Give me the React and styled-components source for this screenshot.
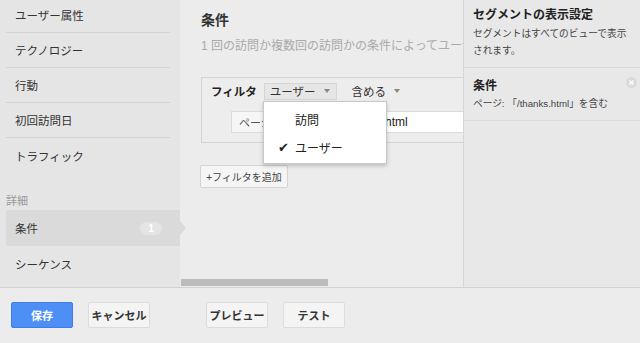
import React from "react";
import styled, { createGlobalStyle } from "styled-components";

const Global = createGlobalStyle`
  html, body { margin: 0; padding: 0; }
  body {
    font-family: "Liberation Sans", "Noto Sans CJK JP", sans-serif;
    color: #333;
    background: #ececec;
  }
  * { box-sizing: border-box; }
`;

const Page = styled.div`
  width: 640px;
  height: 343px;
  display: flex;
  flex-direction: column;
  overflow: hidden;
`;

const Top = styled.div`
  height: 287px;
  display: flex;
`;

const Sidebar = styled.div`
  width: 180px;
  flex-shrink: 0;
  background: #e5e5e5;
  padding-left: 6px;
  display: flex;
  flex-direction: column;
  margin-top: -2px;
`;

const NavItem = styled.div`
  position: relative;
  height: ${(p) => (p.$selected ? 36 : 35)}px;
  margin-right: ${(p) => (p.$selected ? 0 : 10)}px;
  padding: 0 18px 0 9px;
  display: flex;
  align-items: center;
  justify-content: space-between;
  font-size: 11.5px;
  color: #333;
  background: ${(p) => (p.$selected ? "#dadada" : "transparent")};
  border-bottom: ${(p) => (p.$divider ? "1px solid #d3d3d3" : "none")};
  ${(p) =>
    p.$selected &&
    `
    &::after {
      content: "";
      position: absolute;
      right: -6px;
      top: 50%;
      margin-top: -7px;
      border-left: 6px solid #dadada;
      border-top: 7px solid transparent;
      border-bottom: 7px solid transparent;
    }
  `}
`;

const SectionLabel = styled.div`
  margin-top: 20px;
  height: 17px;
  line-height: 17px;
  font-size: 11px;
  color: #9a9a9a;
`;

const Badge = styled.span`
  min-width: 22px;
  height: 13px;
  border-radius: 7px;
  background: #e4e4e4;
  color: #fff;
  font-size: 10px;
  font-weight: bold;
  display: flex;
  align-items: center;
  justify-content: center;
`;

const Main = styled.div`
  width: 283px;
  flex-shrink: 0;
  background: #ececec;
  display: flex;
  flex-direction: column;
`;

const MainContent = styled.div`
  position: relative;
  flex: 1;
  overflow: hidden;
  padding: 11px 0 0 21px;
`;

const Title = styled.div`
  font-size: 14px;
  font-weight: bold;
  color: #333;
  height: 18px;
  line-height: 18px;
`;

const Subtitle = styled.div`
  margin-top: 9px;
  font-size: 12px;
  color: #aaa;
  white-space: nowrap;
  height: 16px;
  line-height: 16px;
`;

const FilterBox = styled.div`
  margin-top: 23px;
  width: 330px;
  height: 66px;
  border: 1px solid #d4d4d4;
  background: #ededed;
  padding: 4px 0 0 9px;
  display: flex;
  flex-direction: column;
  gap: 11px;
`;

const FilterRow = styled.div`
  display: flex;
  align-items: center;
  height: 18px;
`;

const FilterLabel = styled.span`
  font-size: 11.5px;
  font-weight: bold;
  color: #222;
  margin-right: 7px;
`;

const Select = styled.span`
  display: flex;
  align-items: center;
  gap: ${(p) => (p.$boxed ? 8 : 8)}px;
  height: 17px;
  padding: 0 ${(p) => (p.$boxed ? 6 : 0)}px 0 5px;
  font-size: 11.5px;
  color: #333;
  border: 1px solid ${(p) => (p.$boxed ? "#d6d6d6" : "transparent")};
  background: ${(p) => (p.$boxed ? "#e6e6e6" : "transparent")};
  margin-right: 9px;
`;

const Caret = styled.span`
  width: 0;
  height: 0;
  border-left: 3px solid transparent;
  border-right: 3px solid transparent;
  border-top: 4px solid #888;
`;

const CondRow = styled.div`
  display: flex;
  align-items: center;
  margin-left: 20px;
  height: 22px;
`;

const FieldSelect = styled.div`
  width: 100px;
  height: 22px;
  border: 1px solid #dadada;
  background: #f6f6f6;
  font-size: 11px;
  color: #555;
  display: flex;
  align-items: center;
  padding-left: 7px;
  margin-right: 4px;
`;

const TextInput = styled.div`
  flex: 1;
  height: 22px;
  border: 1px solid #dadada;
  background: #fff;
  font-size: 12px;
  color: #222;
  display: flex;
  align-items: center;
  padding-left: 7px;
`;

const AddButton = styled.button`
  margin-top: 22px;
  margin-left: -1px;
  width: 88px;
  height: 23px;
  border: 1px solid #d4d4d4;
  border-radius: 2px;
  background: #f5f5f5;
  font-family: inherit;
  font-size: 10px;
  color: #444;
  padding: 0;
  display: flex;
  align-items: center;
  justify-content: center;
`;

const Menu = styled.div`
  position: absolute;
  left: 83px;
  top: 101px;
  width: 124px;
  height: 63px;
  background: #fff;
  border: 1px solid #c8c8c8;
  box-shadow: 0 2px 4px rgba(0, 0, 0, 0.2);
  display: flex;
  flex-direction: column;
  padding-top: 3px;
`;

const MenuItem = styled.div`
  height: 28px;
  display: flex;
  align-items: center;
  font-size: 12px;
  color: #222;
  padding-left: 14px;
`;

const Check = styled.span`
  width: 17px;
  font-size: 13px;
  color: #222;
`;

const ScrollTrack = styled.div`
  height: 9px;
  padding: 1px 0 0 1px;
`;

const ScrollThumb = styled.div`
  width: 147px;
  height: 7px;
  background: #bcbcbc;
`;

const Right = styled.div`
  flex: 1;
  background: #e8e8e8;
  border-left: 1px solid #d6d6d6;
  display: flex;
  flex-direction: column;
`;

const RightSection = styled.div`
  padding: ${(p) => p.$pad};
  border-bottom: 1px solid #d9d9d9;
  height: ${(p) => p.$h}px;
`;

const RightHeadRow = styled.div`
  display: flex;
  align-items: center;
  justify-content: space-between;
`;

const RightHeading = styled.div`
  font-size: 12px;
  font-weight: bold;
  color: #222;
  height: 17px;
  line-height: 17px;
  white-space: nowrap;
`;

const RightText = styled.div`
  font-size: 9.7px;
  color: #444;
  height: 17px;
  line-height: 17px;
  white-space: nowrap;
  margin-top: ${(p) => p.$mt || 0}px;
`;

const CloseIcon = styled.span`
  width: 11px;
  height: 11px;
  border-radius: 50%;
  background: #dadada;
  margin-right: 3px;
  margin-top: -8px;
  display: flex;
  align-items: center;
  justify-content: center;
`;

const Footer = styled.div`
  flex: 1;
  border-top: 1px solid #d2d2d2;
  background: #ececec;
  display: flex;
  align-items: flex-start;
  padding: 14px 0 0 11px;
`;

const Button = styled.button`
  width: ${(p) => p.$w || 62}px;
  height: 26px;
  margin-left: ${(p) => p.$ml || 0}px;
  border-radius: 2px;
  border: 1px solid ${(p) => (p.$primary ? "#3f7ee8" : "#dcdcdc")};
  background: ${(p) => (p.$primary ? "#4d8ff5" : "#f4f4f4")};
  color: ${(p) => (p.$primary ? "#fff" : "#333")};
  font-family: inherit;
  font-size: 11px;
  font-weight: bold;
  padding: 0;
`;

const navItems = ["ユーザー属性", "テクノロジー", "行動", "初回訪問日", "トラフィック"];

export default function App() {
  return (
    <Page>
      <Global />
      <Top>
        <Sidebar>
          {navItems.map((t, i) => (
            <NavItem key={t} $divider={i < navItems.length - 1}>
              {t}
            </NavItem>
          ))}
          <SectionLabel>詳細</SectionLabel>
          <NavItem $selected>
            条件
            <Badge>1</Badge>
          </NavItem>
          <NavItem>シーケンス</NavItem>
        </Sidebar>
        <Main>
          <MainContent>
            <Title>条件</Title>
            <Subtitle>1 回の訪問か複数回の訪問かの条件によってユーザーを絞り込みます</Subtitle>
            <FilterBox>
              <FilterRow>
                <FilterLabel>フィルタ</FilterLabel>
                <Select $boxed>
                  ユーザー
                  <Caret />
                </Select>
                <Select>
                  含める
                  <Caret />
                </Select>
              </FilterRow>
              <CondRow>
                <FieldSelect>ページ</FieldSelect>
                <TextInput>/thanks.html</TextInput>
              </CondRow>
            </FilterBox>
            <AddButton>+フィルタを追加</AddButton>
            <Menu>
              <MenuItem>
                <Check />
                訪問
              </MenuItem>
              <MenuItem>
                <Check>✔</Check>
                ユーザー
              </MenuItem>
            </Menu>
          </MainContent>
          <ScrollTrack>
            <ScrollThumb />
          </ScrollTrack>
        </Main>
        <Right>
          <RightSection $pad="7px 0 0 9px" $h={68}>
            <RightHeading>セグメントの表示設定</RightHeading>
            <RightText $mt={1}>セグメントはすべてのビューで表示</RightText>
            <RightText>されます。</RightText>
          </RightSection>
          <RightSection $pad="10px 0 0 9px" $h={53}>
            <RightHeadRow>
              <RightHeading>条件</RightHeading>
              <CloseIcon>
                <svg width="7" height="7" viewBox="0 0 7 7">
                  <path d="M1.5 1.5 L5.5 5.5 M5.5 1.5 L1.5 5.5" stroke="#fff" strokeWidth="1.3" />
                </svg>
              </CloseIcon>
            </RightHeadRow>
            <RightText>ページ: 「/thanks.html」を含む</RightText>
          </RightSection>
        </Right>
      </Top>
      <Footer>
        <Button $primary>保存</Button>
        <Button $ml={15}>キャンセル</Button>
        <Button $ml={56}>プレビュー</Button>
        <Button $ml={15}>テスト</Button>
      </Footer>
    </Page>
  );
}
